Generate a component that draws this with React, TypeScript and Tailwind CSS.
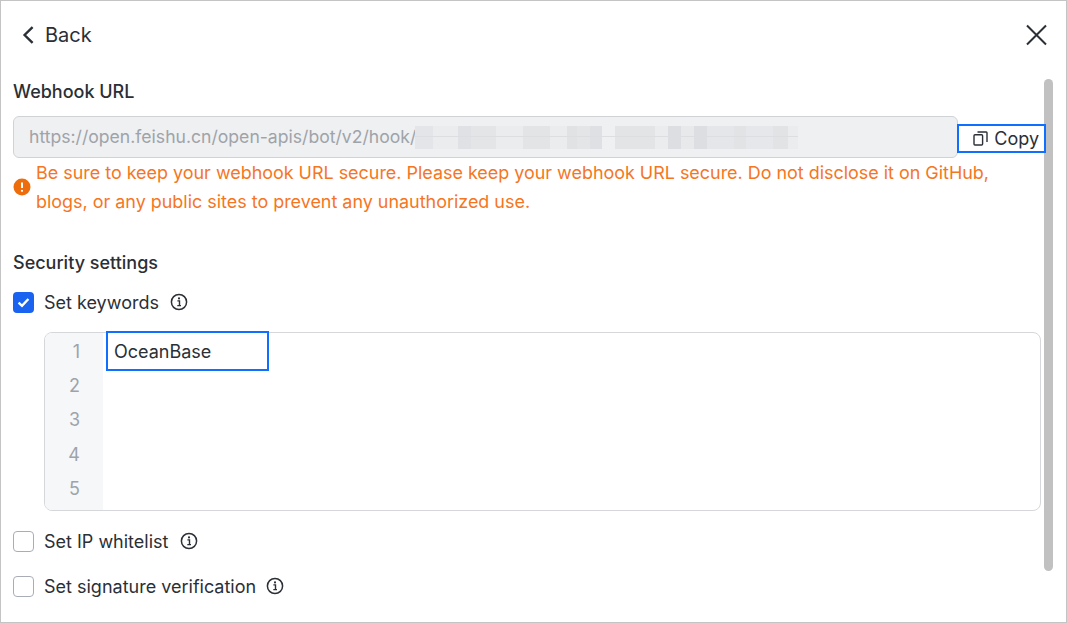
const FONT = "font-['Inter','Liberation_Sans',sans-serif]";

// mosaic that hides the tail of the webhook URL
const BLUR_BLOCKS = [
  { w: 'w-[18px]', c: 'bg-[#e4e5e8]' },
  { w: 'w-[25px]', c: 'bg-[#ebecee]' },
  { w: 'w-[13px]', c: 'bg-[#dfe1e4]' },
  { w: 'w-[25px]', c: 'bg-[#e3e5e7]' },
  { w: 'w-[27px]', c: 'bg-[#ebecee]' },
  { w: 'w-[27px]', c: 'bg-[#e2e4e6]' },
  { w: 'w-[17px]', c: 'bg-[#ebecee]' },
  { w: 'w-[10px]', c: 'bg-[#e0e2e4]' },
  { w: 'w-[13px]', c: 'bg-[#e3e5e7]' },
  { w: 'w-[12px]', c: 'bg-[#dee0e3]' },
  { w: 'w-[13px]', c: 'bg-[#eff0f1]' },
  { w: 'w-[40px]', c: 'bg-[#e2e4e6]' },
  { w: 'w-[13px]', c: 'bg-[#ebecee]' },
  { w: 'w-[13px]', c: 'bg-[#dcdee1]' },
  { w: 'w-[13px]', c: 'bg-[#e8e9eb]' },
  { w: 'w-[13px]', c: 'bg-[#dcdee1]' },
  { w: 'w-[27px]', c: 'bg-[#e5e6e9]' },
  { w: 'w-[12px]', c: 'bg-[#e1e3e5]' },
  { w: 'w-[27px]', c: 'bg-[#e6e7ea]' },
  { w: 'w-[15px]', c: 'bg-[#e1e3e5]' },
  { w: 'w-[10px]', c: 'bg-[#ebecee]' },
];

function InfoIcon() {
  return (
    <svg width="18" height="18" viewBox="0 0 18 18" fill="none" className="shrink-0">
      <circle cx="9" cy="9" r="7.6" stroke="#2b2f36" strokeWidth="1.5" />
      <circle cx="9" cy="5.4" r="1.05" fill="#2b2f36" />
      <path d="M7.4 7.9H9.5V12.4M7.3 12.6H11" stroke="#2b2f36" strokeWidth="1.4" />
    </svg>
  );
}

function Checkbox({ checked }: { checked?: boolean }) {
  if (checked) {
    return (
      <span className="flex h-[21px] w-[21px] shrink-0 items-center justify-center rounded-[4px] bg-[#1a62f0]">
        <svg width="13" height="11" viewBox="0 0 13 11" fill="none">
          <path d="M1.6 5.6L5 8.8L11.4 2" stroke="white" strokeWidth="2.4" />
        </svg>
      </span>
    );
  }
  return <span className="h-[21px] w-[21px] shrink-0 rounded-[4px] border-[1.5px] border-[#a9aeb6] bg-white" />;
}

function Option({ label, checked, gap }: { label: string; checked?: boolean; gap: string }) {
  return (
    <div className="flex h-[22px] items-center">
      <Checkbox checked={checked} />
      <span className={`ml-[10px] text-[18px] text-[#2b2f36] ${gap}`}>{label}</span>
      <InfoIcon />
    </div>
  );
}

export default function App() {
  return (
    <div className={`relative h-[623px] w-[1067px] overflow-hidden border border-[#c4c4c4] bg-white ${FONT}`}>
      <div className="flex flex-col pl-3">
        {/* Header row: back + close */}
        <div className="mt-[24px] flex h-[20px] items-center justify-between pr-[18px]">
          <div className="ml-[9px] flex items-center gap-[11px] text-[#2b2f36]">
            <svg width="12" height="18" viewBox="0 0 12 18" fill="none">
              <path d="M10.6 1.2L2.6 9L10.6 16.8" stroke="#2b2f36" strokeWidth="2.4" />
            </svg>
            <span className="text-[20px]">Back</span>
          </div>
          <svg width="24" height="24" viewBox="0 0 24 24" fill="none">
            <path d="M3 2.5L22 21.5M22 2.5L3 21.5" stroke="#2b2f36" strokeWidth="2" />
          </svg>
        </div>

        {/* Webhook URL */}
        <h2 className="mt-[36px] text-[18px] leading-[22px] font-medium text-[#2b2f36]">Webhook URL</h2>
        <div className="relative mt-[13px] flex h-[42px] w-[945px] items-center overflow-hidden rounded-[6px] border border-[#d0d3d6] bg-[#eff0f1] pl-[15px]">
          <span className="text-[17.6px] whitespace-nowrap text-[#9ea3aa]">https://open.feishu.cn/open-apis/bot/v2/hook/</span>
          <div className="relative -ml-[1px] flex h-[23px] blur-[0.7px]">
            {BLUR_BLOCKS.map((b, i) => (
              <div key={i} className={`${b.w} ${b.c}`} />
            ))}
            <div className="absolute top-[10px] right-0 left-0 h-[1px] bg-[#dcdee1]" />
          </div>
        </div>
        <div className="relative w-[1000px] pl-[23px] text-[17.93px] leading-[29px] text-[#f5761f]">
          Be sure to keep your webhook URL secure. Please keep your webhook URL secure. Do not disclose it on GitHub, blogs, or any public sites to prevent any unauthorized use.
          <svg width="18" height="18" viewBox="0 0 18 18" className="absolute top-[20px] left-0">
            <circle cx="9" cy="9" r="8.5" fill="#ed6d0c" />
            <path d="M9 4.6V10" stroke="white" strokeWidth="2" />
            <circle cx="9" cy="12.8" r="1.1" fill="white" />
          </svg>
        </div>

        {/* Security settings */}
        <h2 className="mt-[36px] text-[18px] leading-[22px] font-medium text-[#2b2f36]">Security settings</h2>
        <div className="mt-[17px]">
          <Option label="Set keywords" checked gap="mr-[11px]" />
        </div>

        <div className="mt-[19px] ml-[31px] flex h-[179px] w-[997px] overflow-hidden rounded-[8px] border border-[#d5d7da]">
          <div className="flex w-[58px] flex-col bg-[#f6f7f9] pt-[2px]">
            {[1, 2, 3, 4, 5].map((n) => (
              <div key={n} className="h-[34.2px] pr-[23px] text-right text-[18px] leading-[34px] text-[#9ea3aa]">
                {n}
              </div>
            ))}
          </div>
          <div className="pt-[2px] pl-[11px] text-[18px] leading-[34px] text-[#2b2f36]">OceanBase</div>
        </div>

        <div className="mt-[19px]">
          <Option label="Set IP whitelist" gap="mr-[12px]" />
        </div>
        <div className="mt-[23px]">
          <Option label="Set signature verification" gap="mr-[10px]" />
        </div>
      </div>

      {/* Scrollbar */}
      <div className="absolute top-[78px] left-[1043px] h-[492px] w-[9px] rounded-full bg-[#c1c1c1]" />

      {/* Copy annotation */}
      <div className="absolute top-[123px] left-[956px] flex h-[29px] w-[89px] items-center justify-end gap-[6px] border-2 border-[#0f6fff] pr-[5px] text-[18px] text-[#2b2f36]">
        <svg width="15" height="15" viewBox="0 0 15 15" fill="none">
          <rect x="1" y="3.7" width="8.6" height="10.3" rx="1" stroke="#2b2f36" strokeWidth="1.4" />
          <path d="M4.5 1H13.2C13.6 1 14 1.4 14 1.8V11" stroke="#2b2f36" strokeWidth="1.4" />
        </svg>
        <span>Copy</span>
      </div>

      {/* OceanBase annotation */}
      <div className="absolute top-[330px] left-[105px] h-[40px] w-[163px] border-2 border-[#0f6fff]" />
    </div>
  );
}
